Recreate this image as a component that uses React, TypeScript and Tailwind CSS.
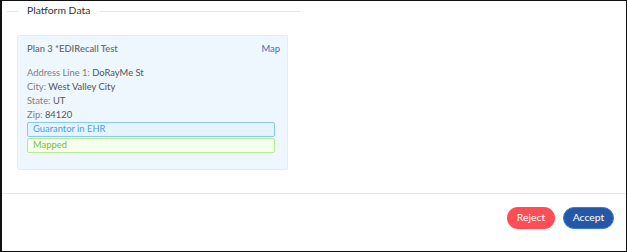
export default function App() {
  return (
    <div
      className="w-[627px] h-[252px] bg-white border border-[#111] border-l-2 flex flex-col text-[9.4px] text-[#333]"
      style={{ fontFamily: "Lato, 'Noto Sans', sans-serif" }}
    >
      {/* Platform data section */}
      <div className="h-[192px] pl-[5px] pt-[2px]">
        <div className="w-[293px] flex items-center h-[16px]">
          <div className="w-[11px] h-px bg-[#e6e6e6]" />
          <span className="ml-[9px] mr-[10px] text-[10.4px] text-[#333]">
            Platform Data
          </span>
          <div className="flex-1 h-px bg-[#e6e6e6]" />
        </div>

        <div className="ml-[10px] mt-[16px] w-[271px] h-[135px] bg-[#eef6fe] border border-[#e3edf7] rounded-[2px] px-[9px] pt-[6px]">
          <div className="flex justify-between items-center h-[14px]">
            <span className="text-[#707070] font-semibold">
              Plan 3 *EDIRecall Test
            </span>
            <span className="text-[#3d6fb6] mr-[-2px]">Map</span>
          </div>

          <div className="mt-[10px] flex flex-col leading-[14px]">
            <div>
              <span className="text-[#808080]">Address Line 1: </span>
              <span className="text-[#555]">DoRayMe St</span>
            </div>
            <div>
              <span className="text-[#808080]">City: </span>
              <span className="text-[#555]">West Valley City</span>
            </div>
            <div>
              <span className="text-[#808080]">State: </span>
              <span className="text-[#555]">UT</span>
            </div>
            <div>
              <span className="text-[#808080]">Zip: </span>
              <span className="text-[#555]">84120</span>
            </div>
          </div>

          <div className="mt-0 w-[248px] h-[15px] flex items-center px-[5px] bg-[#e6f4ff] border border-[#86c8fa] rounded-[2px] text-[#45a0ef]">
            Guarantor in EHR
          </div>
          <div className="mt-px w-[248px] h-[15px] flex items-center px-[5px] bg-[#f6ffed] border border-[#b7eb8f] rounded-[2px] text-[#6fc13c]">
            Mapped
          </div>
        </div>
      </div>

      {/* Footer */}
      <div className="border-t border-[#e6e6e6] flex-1 flex justify-end items-start pt-[13px] pr-[12px] gap-[8px]">
        <button className="w-[48px] h-[22px] rounded-full bg-[#ff4d55] text-white text-[10.4px]">
          Reject
        </button>
        <button className="w-[51px] h-[22px] rounded-full bg-[#2557a7] border border-[#3a7be0] text-white text-[10.4px]">
          Accept
        </button>
      </div>
    </div>
  );
}
